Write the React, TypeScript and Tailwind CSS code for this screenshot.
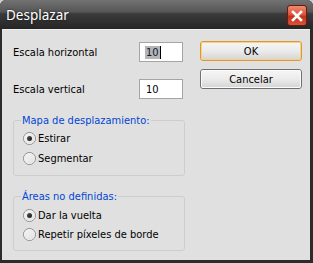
import React from "react";

const ui: React.CSSProperties = {
  fontFamily: '"DejaVu Sans Condensed", "Liberation Sans", sans-serif',
};

function Radio({ checked, label, h }: { checked?: boolean; label: string; h: string }) {
  return (
    <div className={`flex items-center gap-[2px] ${h}`}>
      <div className="ml-[2px] w-[13px] h-[13px] rounded-full border border-[#8b8b8b] bg-gradient-to-br from-[#d6d6d6] to-[#ffffff] flex items-center justify-center">
        <div className="w-[11px] h-[11px] rounded-full bg-gradient-to-br from-[#f4f4f4] to-[#e2e2e2] flex items-center justify-center">
          {checked && (
            <div className="w-[5px] h-[5px] rounded-full bg-gradient-to-br from-[#555] to-[#1a1a1a]" />
          )}
        </div>
      </div>
      <span className="text-[11px] leading-[13px] text-black">{label}</span>
    </div>
  );
}

function Btn({ label, def }: { label: string; def?: boolean }) {
  return (
    <div
      className={`w-[102px] h-[20px] rounded-[3px] border ${
        def ? "border-[#e0962e]" : "border-[#707070]"
      } bg-gradient-to-b from-[#f6f6f6] via-[#ebebeb] to-[#d4d4d4] flex items-center justify-center`}
    >
      <div
        className={`w-full h-full rounded-[2px] border ${
          def ? "border-[#f6d38a]" : "border-[#fbfbfb]"
        } flex items-center justify-center text-[11px] leading-[13px] text-black`}
      >
        {label}
      </div>
    </div>
  );
}

export default function App() {
  return (
    <div className="w-[313px] h-[263px] bg-[#cfcfcf]" style={ui}>
      <div className="w-full h-full flex flex-col rounded-t-[6px] bg-[#2b2b2b] overflow-hidden">
        <div className="h-[29px] flex items-start bg-[linear-gradient(to_bottom,#727272_0%,#575757_40%,#3a3a3a_48%,#262626_100%)]">
          <span
            className="mt-[6px] ml-[6px] text-[13.5px] leading-[18px] text-white"
            style={{ fontFamily: '"Noto Sans", "Open Sans", sans-serif', textShadow: "0 0 3px rgba(0,0,0,0.6)" }}
          >
            Desplazar
          </span>
          <div className="ml-auto mr-[6px] mt-[5px] w-[20px] h-[21px] rounded-[3px] border border-[#6b1a0e] bg-[linear-gradient(to_bottom,#ee8a72_0%,#dc553a_45%,#c7321a_55%,#d5543a_100%)] flex items-center justify-center">
            <svg width="12" height="12" viewBox="0 0 12 12">
              <path d="M2 2 L10 10 M10 2 L2 10" stroke="white" strokeWidth="2.6" strokeLinecap="square" />
            </svg>
          </div>
        </div>
        <div className="flex-1 ml-[2px] mr-[3px] mb-[3px] bg-[#e0e0e0] border-t border-[#f0f0f0] flex items-start pl-[11px]">
          <div className="w-[172px] flex flex-col pt-[12px]">
            <div className="flex items-center justify-between h-[20px] pr-[2px]">
              <span className="text-[11px] leading-[13px] text-black">Escala horizontal</span>
              <div className="w-[44px] h-[20px] border border-[#a5a5a5] bg-white flex items-center pl-[5px]">
                <span className="bg-[#b5b5b5] text-[#111a33] text-[11px] leading-[13px] px-[1px]">10</span>
                <span className="w-[1px] h-[13px] bg-black" />
              </div>
            </div>
            <div className="flex items-center justify-between h-[20px] mt-[17px] pr-[2px]">
              <span className="text-[11px] leading-[13px] text-black">Escala vertical</span>
              <div className="w-[44px] h-[20px] border border-[#a5a5a5] bg-white flex items-center pl-[6px]">
                <span className="text-black text-[11px] leading-[13px]">10</span>
              </div>
            </div>
            <fieldset className="mt-[15px] border border-[#cdcdcd] rounded-[3px] pl-[7px] pt-[1px] pb-[7px]">
              <legend className="px-[1px] text-[11px] leading-[13px] text-[#0046d5]">Mapa de desplazamiento:</legend>
              <Radio checked label="Estirar" h="h-[20px]" />
              <Radio label="Segmentar" h="h-[20px]" />
            </fieldset>
            <fieldset className="mt-[14px] border border-[#cdcdcd] rounded-[3px] pl-[7px] pt-[2px] pb-[6px]">
              <legend className="px-[1px] text-[11px] leading-[13px] text-[#0046d5]">Áreas no definidas:</legend>
              <Radio checked label="Dar la vuelta" h="h-[20px]" />
              <Radio label="Repetir píxeles de borde" h="h-[19px]" />
            </fieldset>
          </div>
          <div className="ml-[15px] pt-[11px] flex flex-col gap-[8px]">
            <Btn label="OK" def />
            <Btn label="Cancelar" />
          </div>
        </div>
      </div>
    </div>
  );
}
